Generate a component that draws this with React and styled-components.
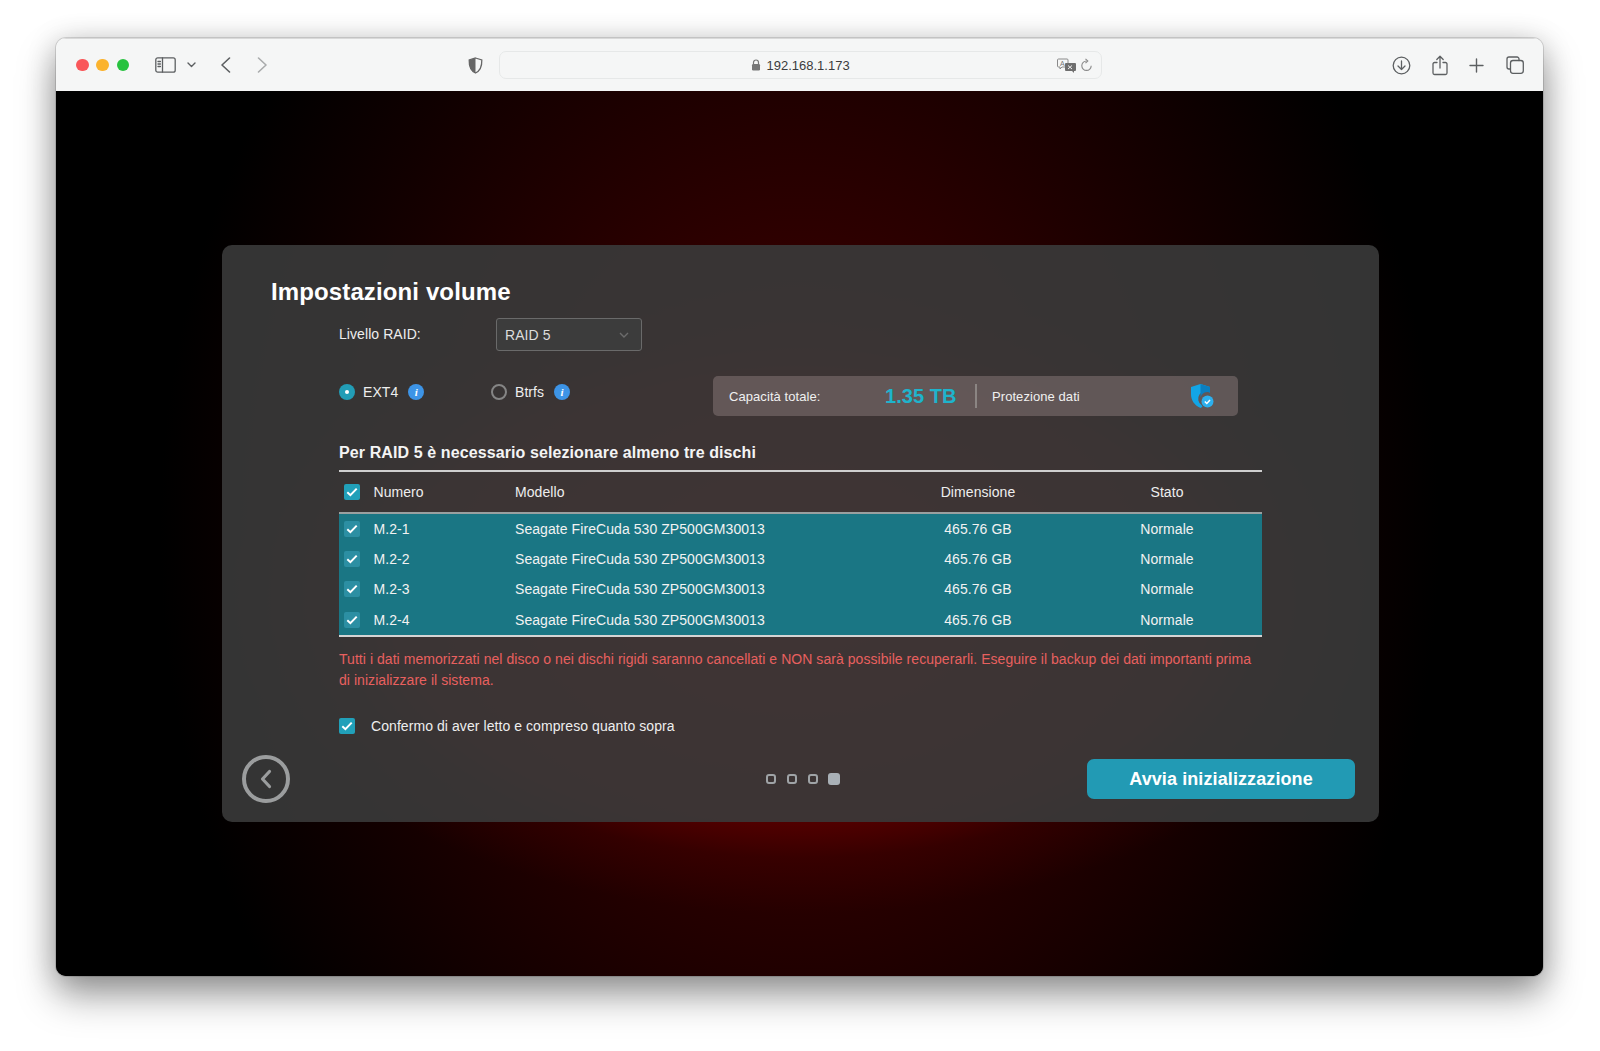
import React from "react";
import styled, { createGlobalStyle } from "styled-components";

const Global = createGlobalStyle`
  html, body { margin: 0; padding: 0; background: #fff; }
  body { font-family: "Liberation Sans", Arial, sans-serif; }
  * { box-sizing: border-box; }
`;
const Page = styled.div`
  width: 1600px; height: 1051px; padding: 38px 57px 75px 56px; background: #fff; overflow: hidden;
`;
const Win = styled.div`
  width: 1487px; height: 938px; border-radius: 10px; overflow: hidden; display: flex; flex-direction: column;
  box-shadow: 0 0 0 1px rgba(0,0,0,.13), 0 20px 38px rgba(0,0,0,.36), 0 4px 30px rgba(0,0,0,.2);
`;
const Toolbar = styled.header`
  height: 53px; flex: none; background: #f5f6f6; display: flex; align-items: center; position: relative; color: #5c5f61;
  border-top: 1px solid #d9d9d9;
`;
const Lights = styled.div`display: flex; gap: 7.8px; margin-left: 20px; margin-right: 26px;`;
const Light = styled.span`width: 12.5px; height: 12.5px; border-radius: 50%; background: ${p => p.$c};`;
const ToolGroup = styled.div`display: flex; align-items: center;`;
const Url = styled.div`
  width: 603px; height: 28px; margin-left: 16px; border: 1.5px solid #e6e8e8; border-radius: 7px; background: #f5f6f6;
  display: grid; grid-template-columns: 1fr auto 1fr; align-items: center; padding: 0 8px 0 5px;
`;
const UrlText = styled.div`
  display: flex; align-items: center; gap: 6px; font-size: 13px; color: #3c3c3c; grid-column: 2; padding-left: 2px;
`;
const UrlTools = styled.div`display: flex; align-items: center; justify-self: end; gap: 3px;`;
const Right = styled.div`display: flex; align-items: center; gap: 15px; margin-left: auto; margin-right: 19px;`;
const Main = styled.main`
  flex: 1; display: flex; align-items: center; justify-content: center; padding-left: 2px;
  background:
    radial-gradient(ellipse 600px 330px at 50% 509px, rgba(130,0,0,.8) 0%, rgba(100,0,0,.62) 68%, rgba(100,0,0,.22) 78%, rgba(100,0,0,0) 95%),
    radial-gradient(ellipse 640px 800px at 50% 50%, #480000 0%, #000 100%),
    #000;
`;
const Panel = styled.section`
  width: 1157px; height: 577px; border-radius: 10px; background: rgba(58,58,58,.9); color: #fff; padding: 33px 24px 0 20px;
  display: flex; flex-direction: column; letter-spacing: .07px;
`;
const Title = styled.h1`margin: 0 0 12px 29px; font-size: 24px; line-height: 28px; font-weight: 700; color: #fff; letter-spacing: .12px;`;
const Content = styled.div`margin-left: 97px; width: 923px; display: flex; flex-direction: column;`;
const RaidRow = styled.div`display: flex; align-items: center; height: 33px; font-size: 14px; color: #eee;`;
const RaidLabel = styled.span`width: 157px; position: relative; top: -1px;`;
const Select = styled.div`
  width: 146px; height: 33px; border: 1px solid #6a6a6a; border-radius: 3px; background: #3c3c3c; padding: 0 12px 0 8px;
  display: flex; align-items: center; justify-content: space-between; color: #ddd; font-size: 14px;
`;
const OptionsRow = styled.div`display: flex; align-items: flex-start; height: 40px; margin-top: 25px;`;
const Radios = styled.div`width: 374px; display: flex; padding-top: 8px;`;
const RadioItem = styled.label`display: flex; align-items: center; width: ${p => p.$w}px; font-size: 14px; color: #eee; height: 16px;`;
const Radio = styled.span`
  width: 16px; height: 16px; border-radius: 50%; margin-right: 8px; display: flex; align-items: center; justify-content: center;
  background: ${p => p.$on ? "#229db6" : "transparent"}; border: ${p => p.$on ? "none" : "2px solid #858585"};
  &::after { content: ""; width: 4px; height: 4px; border-radius: 50%; background: ${p => p.$on ? "#fff" : "transparent"}; }
`;
const Info = styled.span`
  width: 16px; height: 16px; border-radius: 50%; background: #3d94e6; margin-left: 10px; color: #fff; font: italic 700 11px/16px "Liberation Serif", serif; text-align: center;
`;
const Summary = styled.div`
  width: 525px; height: 40px; border-radius: 5px; background: rgba(125,112,112,.6); display: flex; align-items: center; padding: 0 24px 0 16px;
  font-size: 13px; color: #f0f0f0;
`;
const SumLabel = styled.span`width: 156px;`;
const Cap = styled.strong`font-size: 20px; font-weight: 700; color: #1eb4cc; width: 90px; white-space: nowrap;`;
const Divider = styled.span`width: 2px; height: 24px; background: #8b8583; margin-right: 15px;`;
const SumEnd = styled.span`margin-left: auto; display: flex; align-items: center;`;
const Heading = styled.h2`margin: 27px 0 7px; font-size: 16px; line-height: 20px; font-weight: 700; color: #f4f4f4; letter-spacing: .1px;`;
const Table = styled.div`border-top: 2px solid #cfcfcf; border-bottom: 2px solid #d4d4d4; font-size: 14px;`;
const Cols = styled.div`
  display: grid; grid-template-columns: 34.5px 141.5px 369px 188px 190px; align-items: center;
`;
const Head = styled(Cols)`height: 42px; border-bottom: 2px solid #9aa0a0; color: #eee;`;
const Row = styled(Cols)`height: 30.2px; background: #1a7684; color: #f2f2f2;`;
const Center = styled.span`text-align: center;`;
const CheckCell = styled.span`display: flex; padding-left: 5px;`;
const Check = styled.span`
  width: 16px; height: 16px; border-radius: 2px; background: ${p => p.$soft ? "#2c8fa3" : "#21a0b9"}; display: flex; align-items: center; justify-content: center; flex: none;
`;
const Warning = styled.p`margin: 12px 0 0; font-size: 14px; line-height: 21px; color: #e8605f; letter-spacing: .05px;`;
const Confirm = styled.label`display: flex; align-items: center; gap: 16px; margin-top: 25px; height: 20px; font-size: 14px; color: #eee;`;
const Footer = styled.div`
  display: grid; grid-template-columns: 48px 1fr 268px; align-items: center; margin-top: 19px; height: 48px;
`;
const BackBtn = styled.button`
  width: 48px; height: 48px; border-radius: 50%; border: 4px solid #9b9d9e; background: transparent; padding: 0; display: flex; align-items: center; justify-content: center;
`;
const Dots = styled.div`display: flex; align-items: center; gap: 11px; margin-left: 476px;`;
const Dot = styled.span`
  width: ${p => p.$on ? 12 : 10}px; height: ${p => p.$on ? 12 : 10}px; border-radius: 3px; margin-left: ${p => p.$on ? -1 : 0}px;
  background: ${p => p.$on ? "#a9b0b6" : "transparent"}; border: ${p => p.$on ? "none" : "2px solid #9fa3a6"};
`;
const Primary = styled.button`
  width: 268px; height: 40px; border: none; border-radius: 7px; background: #229ab4; color: #fff; padding: 2px 0 0; font: 700 18px "Liberation Sans", Arial, sans-serif; letter-spacing: .1px;
`;

const Tick = () => (
  <svg width="12" height="10" viewBox="0 0 12 10"><path d="M1.3 5.2 4.4 8.2 10.7 1.6" fill="none" stroke="#fff" strokeWidth="2" /></svg>
);
const S = { fill: "none", stroke: "currentColor", strokeWidth: 1.5, strokeLinecap: "round", strokeLinejoin: "round" };

const rows = ["M.2-1", "M.2-2", "M.2-3", "M.2-4"];

export default function App() {
  return (
    <Page>
      <Global />
      <Win>
        <Toolbar>
          <Lights>
            <Light $c="#f9575a" /><Light $c="#fbb32e" /><Light $c="#27c23f" />
          </Lights>
          <ToolGroup>
            <svg width="21" height="16" viewBox="0 0 21 16" {...S} strokeWidth="1.3">
              <rect x=".8" y=".8" width="19.4" height="14.4" rx="2" />
              <path d="M7.5 1v14" />
              <path d="M3 4.5h2.4M3 7h2.4M3 9.5h2.4" />
            </svg>
            <svg style={{ marginLeft: 11 }} width="9" height="6" viewBox="0 0 9 6" {...S} strokeWidth="1.4"><path d="M1 1l3.5 3.5L8 1" /></svg>
            <svg style={{ marginLeft: 24 }} width="11" height="16" viewBox="0 0 11 16" {...S} strokeWidth="1.6"><path d="M9.5 1 2 8l7.5 7" /></svg>
            <svg style={{ marginLeft: 26, color: "#a9abac" }} width="11" height="16" viewBox="0 0 11 16" {...S} strokeWidth="1.6"><path d="M1.5 1 9 8l-7.5 7" /></svg>
            <svg style={{ marginLeft: 200 }} width="15" height="17" viewBox="0 0 15 17">
              <path d="M7.5 1 13.8 3c.2 6-1 10.500-6.300 13C2.200 13.500 1 9 1.200 3z" fill="none" stroke="#666" strokeWidth="1.300" />
              <path d="M7.500 1 1.200 3C1 9 2.200 13.500 7.500 16z" fill="#666" />
            </svg>
          </ToolGroup>
          <Url>
            <UrlText>
              <svg width="10" height="12" viewBox="0 0 10 12"><path d="M2.500 5V3.500a2.500 2.500 0 0 1 5 0V5" fill="none" stroke="#777" strokeWidth="1.200" /><rect x="1" y="5" width="8" height="6.500" rx="1.200" fill="#777" /></svg>
              192.168.1.173
            </UrlText>
            <UrlTools>
              <svg width="20" height="15" viewBox="0 0 20 15">
                <path d="M1.500 1h8.500a1 1 0 0 1 1 1v6a1 1 0 0 1-1 1H5L3 11V9H1.500a1 1 0 0 1-1-1V2a1 1 0 0 1 1-1z" fill="none" stroke="#8a8a8a" />
                <text x="3" y="7.500" fontSize="7" fontFamily="Liberation Sans" fill="#777">A</text>
                <path d="M9 5h9a1 1 0 0 1 1 1v6a1 1 0 0 1-1 1h-1v2l-2-2H9a1 1 0 0 1-1-1V6a1 1 0 0 1 1-1z" fill="#6e6e6e" />
                <path d="M11 7.500l4 3.500m0-3.500l-4 3.500" stroke="#eee" strokeWidth="1" />
              </svg>
              <svg width="13" height="14" viewBox="0 0 13 14" fill="none" stroke="#8a8a8a" strokeWidth="1.100"><path d="M6.500 3a4.700 4.700 0 1 0 4.700 4.700" /><path d="M5.500 .8 7.800 3 5.500 5.200" /></svg>
            </UrlTools>
          </Url>
          <Right>
            <svg width="19" height="19" viewBox="0 0 19 19" {...S} strokeWidth="1.300"><circle cx="9.500" cy="9.500" r="8.300" /><path d="M9.500 5v8.500M6 10l3.500 3.500L13 10" /></svg>
            <svg style={{ marginLeft: 6 }} width="16" height="21" viewBox="0 0 16 21" {...S} strokeWidth="1.300"><path d="M8 13V1.500M4.800 4.500 8 1.300l3.200 3.200" /><path d="M5 7.500H2.500a1.500 1.500 0 0 0-1.500 1.500v9a1.500 1.500 0 0 0 1.500 1.500h11a1.500 1.500 0 0 0 1.500-1.500V9a1.500 1.500 0 0 0-1.500-1.500H11" /></svg>
            <svg style={{ marginLeft: 6 }} width="15" height="15" viewBox="0 0 15 15" {...S} strokeWidth="1.400"><path d="M7.500 1v13M1 7.500h13" /></svg>
            <svg style={{ marginLeft: 7 }} width="18" height="18" viewBox="0 0 18 18" {...S} strokeWidth="1.300"><rect x="4.500" y="4.500" width="12.800" height="12.800" rx="2.500" /><path d="M13 4.500V3a2 2 0 0 0-2-2H3a2 2 0 0 0-2 2v8a2 2 0 0 0 2 2h1.500" /></svg>
          </Right>
        </Toolbar>
        <Main>
          <Panel>
            <Title>Impostazioni volume</Title>
            <Content>
              <RaidRow>
                <RaidLabel>Livello RAID:</RaidLabel>
                <Select>
                  RAID 5
                  <svg width="10" height="6" viewBox="0 0 10 6" fill="none" stroke="#6c6c6c" strokeWidth="1.400"><path d="M1 1l4 4 4-4" /></svg>
                </Select>
              </RaidRow>
              <OptionsRow>
                <Radios>
                  <RadioItem $w={152}><Radio $on />EXT4<Info>i</Info></RadioItem>
                  <RadioItem $w={100}><Radio />Btrfs<Info>i</Info></RadioItem>
                </Radios>
                <Summary>
                  <SumLabel>Capacità totale:</SumLabel>
                  <Cap>1.35 TB</Cap>
                  <Divider />
                  Protezione dati
                  <SumEnd>
                    <svg width="24" height="26" viewBox="0 0 24 26">
                      <path d="M10.500 1 20 4v5.500A7 7 0 0 0 11.500 22l1 1.800-2 1.200C4 22 1 17 1 11V4z" fill="#12a5e6" />
                      <path d="M10.500 1 20 4v5.500a7 7 0 0 0-9.500 5z" fill="#0b7fc0" />
                      <circle cx="17.500" cy="18.500" r="6" fill="#2cb0ee" />
                      <path d="m14.800 18.500 2 2 3.200-3.500" fill="none" stroke="#fff" strokeWidth="1.500" />
                    </svg>
                  </SumEnd>
                </Summary>
              </OptionsRow>
              <Heading>Per RAID 5 è necessario selezionare almeno tre dischi</Heading>
              <Table>
                <Head>
                  <CheckCell><Check><Tick /></Check></CheckCell>
                  <span>Numero</span>
                  <span>Modello</span>
                  <Center>Dimensione</Center>
                  <Center>Stato</Center>
                </Head>
                {rows.map(r => (
                  <Row key={r}>
                    <CheckCell><Check $soft><Tick /></Check></CheckCell>
                    <span>{r}</span>
                    <span>Seagate FireCuda 530 ZP500GM30013</span>
                    <Center>465.76 GB</Center>
                    <Center>Normale</Center>
                  </Row>
                ))}
              </Table>
              <Warning>
                Tutti i dati memorizzati nel disco o nei dischi rigidi saranno cancellati e NON sarà possibile recuperarli. Eseguire il backup dei dati importanti prima
                <br />
                di inizializzare il sistema.
              </Warning>
              <Confirm><Check><Tick /></Check>Confermo di aver letto e compreso quanto sopra</Confirm>
            </Content>
            <Footer>
              <BackBtn aria-label="Indietro">
                <svg width="14" height="22" viewBox="0 0 14 22" fill="none" stroke="#9b9d9e" strokeWidth="3.2" strokeLinecap="round" strokeLinejoin="round"><path d="M10.500 3.500 3.500 11l7 7.500" /></svg>
              </BackBtn>
              <Dots><Dot /><Dot /><Dot /><Dot $on /></Dots>
              <Primary>Avvia inizializzazione</Primary>
            </Footer>
          </Panel>
        </Main>
      </Win>
    </Page>
  );
}
